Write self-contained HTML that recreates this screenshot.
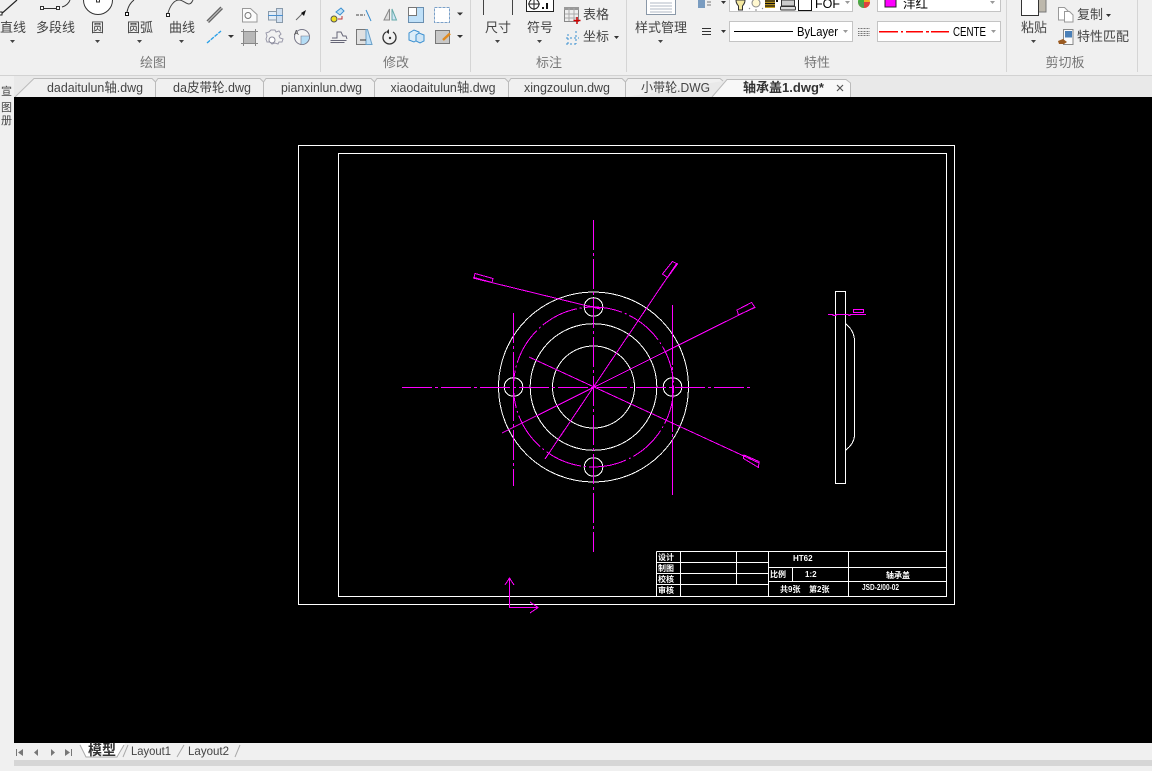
<!DOCTYPE html>
<html lang="zh"><head><meta charset="utf-8"><title>CAD</title>
<style>
html,body{margin:0;padding:0;background:#f0f0f0;width:1152px;height:771px;overflow:hidden}
svg{display:block;position:absolute;left:0;top:0}
text{font-family:"Liberation Sans","Noto Sans CJK SC",sans-serif;font-size:13px;fill:#444}
.c{text-anchor:middle}
.g{fill:#777}
.k{fill:#000}
.cad{shape-rendering:crispEdges;fill:none}
.w{stroke:#fff;fill:none}
.m{stroke:#f0f;fill:none}
.i{fill:none;stroke:#667;stroke-width:1}
.b{fill:none;stroke:#3a8fd0;stroke-width:1}
.tt{font-size:8px;fill:#fff;font-weight:bold}
</style></head><body>
<svg width="1152" height="771" viewBox="0 0 1152 771" xmlns="http://www.w3.org/2000/svg">
<rect width="1152" height="771" fill="#f0f0f0"/>
<!-- ribbon bottom -->
<rect x="0" y="75" width="1152" height="22" fill="#e9e9e9"/>
<line x1="0" y1="75.5" x2="1152" y2="75.5" stroke="#d2d2d2"/>
<!-- separators -->
<g stroke="#d5d5d5"><line x1="320.5" y1="0" x2="320.5" y2="72"/><line x1="470.5" y1="0" x2="470.5" y2="72"/><line x1="626.5" y1="0" x2="626.5" y2="72"/><line x1="1006.5" y1="0" x2="1006.5" y2="72"/><line x1="1137.5" y1="0" x2="1137.5" y2="72"/></g>

<!-- draw panel big icons -->
<path d="M0 15L17 0" stroke="#222" stroke-width="1.2" fill="none"/><rect x="-1" y="12" width="3" height="3" fill="#fff" stroke="#222"/>
<path d="M42 8.500H58M62 7C66 6 69 3 70 0" stroke="#333" fill="none"/>
<rect x="40.500" y="6.500" width="3" height="3" fill="#fff" stroke="#333"/><rect x="56.500" y="6.500" width="3" height="3" fill="#fff" stroke="#333"/>
<circle cx="98" cy="0" r="14.500" fill="#fff" stroke="#333"/><rect x="96.500" y="-1" width="3" height="3" fill="#fff" stroke="#333"/>
<path d="M127 12C128 7 130 3 134 0" stroke="#333" fill="none"/><rect x="125.500" y="12.500" width="3" height="3" fill="#fff" stroke="#111"/>
<path d="M168 13C170 6 174 0 179 0C183 0 186 4 189 4C191 4 192 2 193 0" stroke="#444" fill="none"/><rect x="166.500" y="13.500" width="3" height="3" fill="#fff" stroke="#222"/>

<!-- small draw icons -->
<path d="M207 21L221 7M208.500 22.500L222.500 8.500" stroke="#666" stroke-width="1.500" fill="none"/>
<path d="M207 43L221 31" stroke="#2aa0e8" stroke-width="1.400" fill="none" stroke-dasharray="4 1"/>
<path d="M228 35h6l-3 3z" fill="#333"/>
<path d="M242.500 8.500h8l6.500 6v7.500h-14.500z" fill="#fbfbfb" stroke="#999"/><circle cx="248" cy="15.500" r="3" fill="none" stroke="#777"/>
<rect x="268.500" y="11.500" width="9" height="8.500" fill="#e2ecf6" stroke="#8a9aaa"/><rect x="276.500" y="8.500" width="6" height="14" fill="#cfdff0" stroke="#8a9aaa"/><line x1="268" y1="15.500" x2="283" y2="15.500" stroke="#4a90d0"/>
<path d="M296 20L303 13" stroke="#666"/><path d="M301 13l5-3-2 6z" fill="#111"/>
<rect x="243.500" y="31.500" width="12" height="12" fill="#b8b8b8" stroke="#777"/><path d="M241 31.500h17M241 43.500h17M243.500 29v17M255.500 29v17" stroke="#888" fill="none"/>
<path d="M271 30h4l1 2 3-1 2 3-2 2 1 2 3 1-1 3-3 0-1 2-3-1-3 1-2-2-3 0-1-3 1-3-1-3 3-1z" fill="#f2f2f2" stroke="#99a"/><circle cx="272" cy="40" r="3" fill="#fff" stroke="#889"/>
<circle cx="302" cy="37" r="7.500" fill="#f4f4f4" stroke="#778"/><path d="M301 36H309.500A8 8 0 0 1 301 44.500Z" fill="#b5ddf5" stroke="#778" stroke-width=".6"/><text x="294" y="35" style="font-size:7px">A</text>

<!-- modify icons -->
<circle cx="334" cy="19" r="3" fill="#f0e020" stroke="#555"/><path d="M336 12l5-4 3 3-4 4z" fill="#bfe0f5" stroke="#3a8fd0"/><path d="M338 19h4v-3" stroke="#b33" fill="none"/>
<path d="M356 15h9" stroke="#444" stroke-dasharray="3 1"/><path d="M366 10L371 21" stroke="#3a8fd0" fill="none"/>
<path d="M389.500 9L384 20h5.500z" fill="#ddd" stroke="#888"/><path d="M392 9L396.500 20h-4.500z" fill="#cfe5f5" stroke="#6aa"/>
<rect x="408.500" y="7.500" width="15" height="15" fill="#bfe0f8" stroke="#6a8fb0"/><rect x="408.500" y="7.500" width="8" height="8" fill="#fff" stroke="#777"/>
<rect x="434.500" y="7.500" width="15" height="15" fill="#fff" stroke="#7aa0c8" stroke-dasharray="3 1"/><path d="M457 12.500h6l-3 3z" fill="#333"/>
<path d="M330.500 40.500h16M330.500 42.500h14M332 38h5v-6h4l2 4h3l1 3" class="i"/>
<path d="M356.500 29.500h9.500v15h-9.500z" fill="#e0e0e0" stroke="#777"/><path d="M366 29.500h1.500l4.500 15h-6z" fill="#bfe0f8" stroke="#6aa0c8"/><path d="M360 40h6" stroke="#333"/>
<path d="M386 32a6.500 6.500 0 1 0 7 0" fill="none" stroke="#333" stroke-width="1.300"/><circle cx="390" cy="38" r="1.200" fill="#333"/><path d="M389 29l-3 3 3 2z" fill="#333"/>
<path d="M409 33l5-3 5 2v7l-5 3-5-2z" fill="#dcedf8" stroke="#3a8fd0"/><path d="M416 35l3-2 5 2v6l-4 2-4-2z" fill="#cfe5f5" stroke="#3a8fd0"/>
<rect x="435.500" y="30.500" width="14" height="13" fill="#c8c8c8" stroke="#777"/><path d="M443 40L450 33.500" stroke="#e08a20" stroke-width="2.500"/><path d="M457 35h6l-3 3z" fill="#333"/>

<!-- annotate icons -->
<path d="M483.500 0V15M512.500 0V15" stroke="#444"/>
<rect x="526.500" y="-2" width="27" height="13.500" fill="#fff" stroke="#222"/><circle cx="534" cy="4" r="5" fill="none" stroke="#222"/><path d="M534 -2V10M528 4h12" stroke="#222" fill="none"/><rect x="546" y="3" width="2" height="6" fill="#111"/><rect x="542" y="7" width="2" height="2" fill="#111"/>
<rect x="564.500" y="7.500" width="14" height="14" fill="#eee" stroke="#888"/><rect x="564" y="7" width="15" height="3" fill="#999"/><path d="M569 8v13M574 8v13M565 14h13M565 18h13" stroke="#aaa"/><path d="M577 17v7M573.500 20.500h7" stroke="#c00" stroke-width="1.500"/>
<path d="M568 34v10M576 31v13M566 44h12M566 38h13" stroke="#3a8fd0" stroke-dasharray="2 2" fill="none"/>
<path d="M614 36h5l-2.500 3z" fill="#333"/><path d="M1106 14h5l-2.500 3z" fill="#333"/>

<!-- style manager -->
<path d="M646.500 0V14.500H675.500V0" fill="#fff" stroke="#8a98a8"/><path d="M650 3h22M650 6h22M650 9h22M650 12h22" stroke="#b0b8c4"/>

<!-- property row -->
<rect x="698" y="0" width="7" height="8" fill="#7a9cc0"/><path d="M707 2h4M707 5h4" stroke="#777"/><path d="M721 1h5l-2.500 3z" fill="#333"/>
<rect x="729.500" y="-2" width="123" height="13.500" fill="#fff" stroke="#c4c4c4"/>
<path d="M736 0h9c0 3-1 4-2.500 6v4h-4V6c-1.500-2-2.500-3-2.500-6z" fill="#f5e9a0" stroke="#333"/>
<circle cx="756" cy="3" r="4" fill="#fff8d0" stroke="#888"/><path d="M750 8l-1 1M762 8l1 1M756 9v2" stroke="#888"/>
<rect x="765" y="0" width="10" height="8" fill="#c8a020"/><path d="M765 1h10M765 3.500h10M765 6h10" stroke="#111" stroke-width="1.200"/><rect x="776" y="0" width="2" height="2" fill="#111"/>
<rect x="781.500" y="0" width="13" height="6" fill="#ccc" stroke="#333"/><rect x="780.500" y="6.500" width="15" height="3.500" rx="1" fill="#ddd" stroke="#333"/>
<rect x="798.500" y="-2" width="13" height="12.500" fill="#fff" stroke="#111"/>
<text x="815" y="8" class="k" style="font-size:12.500px">FOF</text>
<path d="M845 1h5l-2.500 3z" fill="#999"/>
<circle cx="864" cy="2" r="6" fill="#f0b020"/><path d="M858 2a6 6 0 0 1 6-6v6z" fill="#40b040"/><path d="M864 2h6a6 6 0 0 1-6 6z" fill="#e04040"/><path d="M858 2h6v6a6 6 0 0 1-6-6z" fill="#50a050"/>
<rect x="877.500" y="-2" width="123" height="13.500" fill="#fff" stroke="#c4c4c4"/>
<rect x="885" y="-1" width="11" height="8" fill="#f0f" stroke="#222"/>
<text x="903" y="8" class="k" style="font-size:12.500px">洋红</text>
<path d="M990 1h5l-2.500 3z" fill="#999"/>

<path d="M702 28.500h9M702 31.500h9M702 34.500h9" stroke="#333" fill="none"/><path d="M721 30h5l-2.500 3z" fill="#333"/>
<rect x="729.500" y="21.500" width="123" height="20" fill="#fff" stroke="#c4c4c4"/>
<rect x="734" y="31" width="59" height="1" fill="#000"/>
<text x="797" y="36" class="k" style="font-size:12.500px" textLength="41" lengthAdjust="spacingAndGlyphs">ByLayer</text>
<path d="M843 30h5l-2.500 3z" fill="#999"/>
<path d="M858 28.500h12M858 31.500h12M858 33.500h12M858 35.500h12" stroke="#777" stroke-dasharray="1 .5" fill="none"/>
<rect x="877.500" y="21.500" width="123" height="20" fill="#fff" stroke="#c4c4c4"/>
<g fill="#ff0000"><rect x="879" y="31" width="19" height="1.500"/><rect x="901" y="31" width="2" height="1.500"/><rect x="906" y="31" width="17" height="1.500"/><rect x="926" y="31" width="3" height="1.500"/><rect x="931" y="31" width="18" height="1.500"/></g>
<text x="953" y="36" class="k" style="font-size:12.500px" textLength="33" lengthAdjust="spacingAndGlyphs">CENTE</text>
<path d="M991 30h5l-2.500 3z" fill="#999"/>

<!-- clipboard -->
<rect x="1037" y="-2" width="9" height="14" fill="#bdb8ac" stroke="#777"/>
<rect x="1021.500" y="-2" width="17" height="17.500" fill="#fff" stroke="#333"/>
<path d="M1058.500 7.500h6l3.500 3.500v9h-9.500z" fill="#fff" stroke="#999"/><path d="M1064.500 11.500h5l3.500 3.500v7h-8.500z" fill="#fff" stroke="#999"/>
<rect x="1063.500" y="29.500" width="9.500" height="15" fill="#fafafa" stroke="#888"/><rect x="1065" y="31" width="7" height="6.500" fill="#4a80b8"/><path d="M1058 41l5-2 4 3-3 2h-5z" fill="#9a5a20"/>

<!-- ribbon labels -->
<text x="13" y="32" class="c">直线</text>
<text x="55.500" y="32" class="c">多段线</text>
<text x="97.500" y="32" class="c">圆</text>
<text x="140" y="32" class="c">圆弧</text>
<text x="182" y="32" class="c">曲线</text>
<text x="498" y="32" class="c">尺寸</text>
<text x="540" y="32" class="c">符号</text>
<text x="596" y="19" class="c">表格</text>
<text x="596" y="41" class="c">坐标</text>
<text x="661" y="32" class="c">样式管理</text>
<text x="1034" y="32" class="c">粘贴</text>
<text x="1090" y="19" class="c">复制</text>
<text x="1103" y="41" class="c">特性匹配</text>
<g fill="#444"><path d="M10 40h5l-2.500 3z"/><path d="M95 40h5l-2.500 3z"/><path d="M137 40h5l-2.500 3z"/><path d="M179 40h5l-2.500 3z"/><path d="M495 40h5l-2.500 3z"/><path d="M537 40h5l-2.500 3z"/><path d="M658 40h5l-2.500 3z"/><path d="M1031 40h5l-2.500 3z"/></g>
<text x="153" y="67" class="c g">绘图</text>
<text x="396" y="67" class="c g">修改</text>
<text x="549" y="67" class="c g">标注</text>
<text x="817" y="67" class="c g">特性</text>
<text x="1065" y="67" class="c g">剪切板</text>

<!-- file tabs -->
<path d="M15 97L34 78.500H152L155.500 82V97" fill="#f0f0f0" stroke="#bbb"/>
<path d="M155.500 97V82L158 78.500H260L263.500 82V97" fill="#f0f0f0" stroke="#bbb"/>
<path d="M263.500 97V82L266 78.500H371L374.500 82V97" fill="#f0f0f0" stroke="#bbb"/>
<path d="M374.500 97V82L377 78.500H505L508.500 82V97" fill="#f0f0f0" stroke="#bbb"/>
<path d="M508.500 97V82L511 78.500H622L625.500 82V97" fill="#f0f0f0" stroke="#bbb"/>
<path d="M625.500 97V82L628 78.500H720L723 81" fill="#f0f0f0" stroke="#bbb"/>
<path d="M712 97L727 79.500H846L850.500 83V97" fill="#f8f8f8" stroke="#bbb"/>
<text x="95" y="92" class="c" textLength="96" lengthAdjust="spacingAndGlyphs">dadaitulun轴.dwg</text>
<text x="212" y="92" class="c" textLength="78" lengthAdjust="spacingAndGlyphs">da皮带轮.dwg</text>
<text x="321.500" y="92" class="c" textLength="81" lengthAdjust="spacingAndGlyphs">pianxinlun.dwg</text>
<text x="443" y="92" class="c" textLength="105" lengthAdjust="spacingAndGlyphs">xiaodaitulun轴.dwg</text>
<text x="567" y="92" class="c" textLength="86" lengthAdjust="spacingAndGlyphs">xingzoulun.dwg</text>
<text x="675.500" y="92" class="c" textLength="69" lengthAdjust="spacingAndGlyphs">小带轮.DWG</text>
<text x="783.500" y="92" class="c" style="font-weight:bold;fill:#333" textLength="81" lengthAdjust="spacingAndGlyphs">轴承盖1.dwg*</text>
<path d="M837 85l6 6M843 85l-6 6" stroke="#555" stroke-width="1.200"/>

<!-- left strip -->
<rect x="0" y="76" width="14" height="667" fill="#f0f0f0"/>
<text x="1" y="95" style="font-size:11px">宣</text><text x="1" y="111" style="font-size:11px">图</text><text x="1" y="124" style="font-size:11px">册</text>

<!-- canvas -->
<rect x="14" y="97" width="1138" height="646" fill="#000"/>
<g class="cad">
<rect class="w" x="298.500" y="145.500" width="656" height="459"/>
<rect class="w" x="338.500" y="153.500" width="608" height="443"/>
<!-- title block -->
<path class="w" d="M656.500 551.500H946M656.500 562.500H768M656.500 573.500H768M768 567.500H946M656.500 584.500H768M768 581.500H946M656.500 551.500V596M680.500 551.500V596M736.500 551.500V584.500M768.500 551.500V596M792.500 567.500V581.500M848.500 551.500V596"/>
<!-- circles -->
<circle class="w" cx="593.500" cy="387" r="95"/>
<circle class="w" cx="593.500" cy="387" r="63.300"/>
<circle class="w" cx="593.500" cy="387" r="41"/>
<circle class="w" cx="593.500" cy="307" r="9.300"/>
<circle class="w" cx="593.500" cy="467" r="9.300"/>
<circle class="w" cx="513.500" cy="387" r="9.300"/>
<circle class="w" cx="672.500" cy="387" r="9.300"/>
<circle class="m" cx="593.500" cy="387" r="80" stroke-dasharray="38 3 2 3"/>
<!-- center lines -->
<path class="m" d="M402 387.500H751" stroke-dasharray="30 3 3 3"/>
<path class="m" d="M593.500 220V552" stroke-dasharray="30 3 3 3"/>
<path class="m" d="M513.500 313V486" stroke-dasharray="30 3 3 3"/>
<path class="m" d="M672.500 305V495" stroke-dasharray="60 2 3 2"/>
<!-- leader lines -->
<path class="m" d="M473 278L600 309"/>
<path class="m" d="M585 305.500L601 308"/>
<path class="m" d="M677 263L545 459"/>
<path class="m" d="M755 307L502 433"/>
<path class="m" d="M529 357L759 463"/>
<!-- symbols -->
<path class="m" d="M475 273.500L493 278.500L492 282.500L474 277.500Z"/>
<path class="m" d="M672.500 261.500L677.500 264L667.500 277.500L662.500 274Z"/>
<path class="m" d="M737 310L751.500 302.500L755 307.500L738.500 315Z"/>
<path class="m" d="M744 455L759 461.500L758.500 467.500L743.500 458.500Z"/>
<!-- side view -->
<rect class="w" x="835.500" y="291.500" width="10" height="192"/>
<path class="w" d="M846 324C851 328 854 334 854.500 340V436C854 442 851 446 846 450"/>
<path class="m" d="M828 314.500H833L833 315.500H836V314.500H848L849 315.500H850V314.500H866"/>
<rect class="m" x="853.500" y="309.500" width="10" height="3"/>
<!-- UCS -->
<path class="m" d="M509.500 578V607.500H538M505 585L509.500 578L514 585M530 602L538 607.500L530 613"/>
</g>
<!-- title block text -->
<text x="658" y="560" class="tt">设计</text>
<text x="658" y="571" class="tt">制图</text>
<text x="658" y="582" class="tt">校核</text>
<text x="658" y="593" class="tt">审核</text>
<text x="793" y="561" class="tt">HT62</text>
<text x="770" y="577" class="tt">比例</text>
<text x="805" y="577" class="tt">1:2</text>
<text x="886" y="578" class="tt">轴承盖</text>
<text x="780" y="592" class="tt">共9张</text>
<text x="809" y="592" class="tt">第2张</text>
<text x="862" y="590" class="tt" textLength="37" lengthAdjust="spacingAndGlyphs">JSD-2/00-02</text>

<!-- bottom -->
<rect x="0" y="743" width="1152" height="28" fill="#f0f0f0"/>
<rect x="14" y="760" width="1138" height="6" fill="#d6d6d6"/>
<g fill="#777"><path d="M16 749h1v7h-1zM23 749v7l-5-3.500z"/><path d="M38 749v7l-4-3.500z"/><path d="M51 749v7l4-3.500z"/><path d="M65 749v7l5-3.500zM71 749h1v7h-1z"/></g>
<path d="M80 743L86 757H118L125 743z" fill="#fff"/>
<path d="M80 745L86 757H117L124 745M123 757L128 745M177 757L184 745M235 757L240 745" stroke="#aaa" fill="none"/>
<text x="88" y="755" style="font-weight:bold;font-size:14px;fill:#333">模型</text>
<text x="131" y="755" style="font-size:12px" textLength="40" lengthAdjust="spacingAndGlyphs">Layout1</text>
<text x="188" y="755" style="font-size:12px" textLength="41" lengthAdjust="spacingAndGlyphs">Layout2</text>
</svg>
</body></html>
